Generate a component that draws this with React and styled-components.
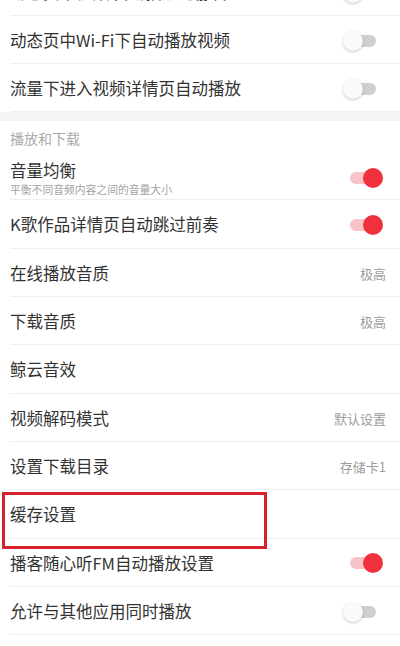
import React from 'react'
import styled, { createGlobalStyle } from 'styled-components'

const GlobalStyle = createGlobalStyle`
  html, body {
    margin: 0;
    padding: 0;
    background: #fff;
  }
  body {
    font-family: "Noto Sans CJK SC", "Noto Sans", sans-serif;
  }
`

const Page = styled.div`
  width: 400px;
  height: 646px;
  overflow: hidden;
  background: #fff;
`

const List = styled.div`
  display: flex;
  flex-direction: column;
  margin-top: ${({ offset }) => offset || 0}px;
`

const Row = styled.div`
  position: relative;
  display: flex;
  align-items: center;
  justify-content: space-between;
  box-sizing: border-box;
  height: ${({ h }) => h || 48.33}px;
  margin-left: 10px;
  padding-top: ${({ shift }) => shift || 2}px;
  padding-right: ${({ toggle }) => (toggle ? 17 : 14)}px;
  border-bottom: 1px solid #eeeeee;
`

const Labels = styled.div`
  display: flex;
  flex-direction: column;
  gap: 1px;
`

const Title = styled.div`
  font-size: 16.5px;
  line-height: 21px;
  color: #333;
  white-space: nowrap;
`

const Sub = styled.div`
  font-size: 10.8px;
  line-height: 14px;
  color: #a3a3a3;
  white-space: nowrap;
`

const Value = styled.div`
  font-size: 13px;
  color: #9d9d9d;
  white-space: nowrap;
`

const Band = styled.div`
  height: 9px;
  background: #f4f4f4;
`

const Header = styled.div`
  box-sizing: border-box;
  height: 31px;
  padding: 7px 0 0 10px;
  font-size: 14px;
  line-height: 20px;
  color: #ababab;
`

const Switch = styled.div`
  position: relative;
  width: 40px;
  height: 20px;
  flex-shrink: 0;

  &::before {
    content: '';
    position: absolute;
    left: 7px;
    top: 4px;
    width: 26px;
    height: 12px;
    border-radius: 6px;
    background: ${({ on }) => (on ? '#f9c4c8' : '#cfcfcf')};
  }

  &::after {
    content: '';
    position: absolute;
    top: 0;
    left: ${({ on }) => (on ? 20 : 0)}px;
    width: 20px;
    height: 20px;
    border-radius: 50%;
    background: ${({ on }) => (on ? '#f0303c' : '#fafafa')};
    box-shadow: ${({ on }) => (on ? 'none' : '0 1px 3px rgba(0, 0, 0, 0.22)')};
  }
`

const Highlight = styled.div`
  position: absolute;
  left: -8px;
  top: 2px;
  width: 259px;
  height: 51px;
  border: 3px solid #d8202b;
  pointer-events: none;
`

const top = [
  { title: '动态页中Wi-Fi下自动播放视频', toggle: false },
  { title: '流量下进入视频详情页自动播放', toggle: false },
]

const play = [
  { title: '音量均衡', sub: '平衡不同音频内容之间的音量大小', toggle: true },
  { title: 'K歌作品详情页自动跳过前奏', toggle: true },
  { title: '在线播放音质', value: '极高' },
  { title: '下载音质', value: '极高' },
  { title: '鲸云音效' },
  { title: '视频解码模式', value: '默认设置' },
  { title: '设置下载目录', value: '存储卡1' },
  { title: '缓存设置', marked: true },
  { title: '播客随心听FM自动播放设置', toggle: true },
  { title: '允许与其他应用同时播放', toggle: false },
]

function SettingRow({ item, h }) {
  const hasSwitch = item.toggle !== undefined
  return (
    <Row h={h} toggle={hasSwitch} shift={item.sub ? 4 : 2}>
      <Labels>
        <Title>{item.title}</Title>
        {item.sub && <Sub>{item.sub}</Sub>}
      </Labels>
      {hasSwitch && <Switch on={item.toggle} />}
      {item.value && <Value>{item.value}</Value>}
      {item.marked && <Highlight />}
    </Row>
  )
}

export default function App() {
  return (
    <Page>
      <GlobalStyle />
      <List offset={-32}>
        <SettingRow h={48} item={{ title: '动态页中视频 自动播放时静音', toggle: false }} />
        {top.map((item) => (
          <SettingRow key={item.title} h={48} item={item} />
        ))}
      </List>
      <Band />
      <Header>播放和下载</Header>
      <List>
        {play.map((item) => (
          <SettingRow key={item.title} item={item} />
        ))}
      </List>
    </Page>
  )
}
